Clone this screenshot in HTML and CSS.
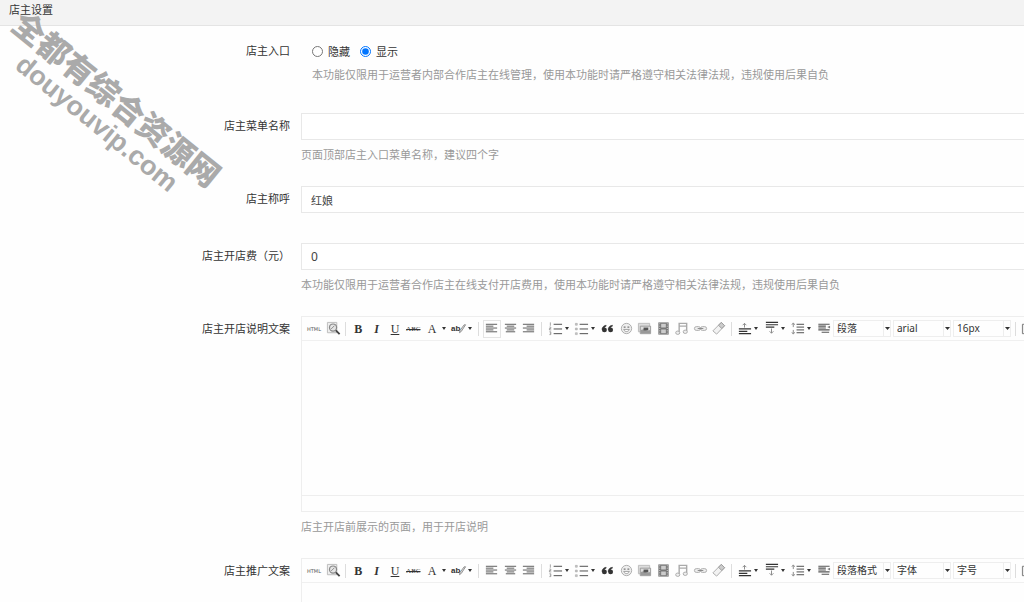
FILE: index.html
```html
<!DOCTYPE html>
<html lang="zh-CN">
<head>
<meta charset="utf-8">
<title>店主设置</title>
<link rel="stylesheet" href="styles.css">
</head>
<body>
<svg class="sprite" aria-hidden="true">
  <symbol id="i-preview" viewBox="0 0 16 16"><path d="M1.500 1.500h10v11h-10z" fill="#eee" stroke="#bbb"/><circle cx="7.500" cy="7" r="3.800" fill="#e4e4e4" stroke="#888" stroke-width="1.300"/><path d="M5.500 8.500l3.500-3.500" stroke="#888"/><path d="M10.500 10l4 4" stroke="#444" stroke-width="2"/></symbol>
  <symbol id="i-mark" viewBox="0 0 16 16"><path d="M14.500 4l-4.500 7-2 1.500.5-2.500 4.500-6z" fill="#ddd" stroke="#777" stroke-width=".8"/></symbol>
  <symbol id="i-left" viewBox="0 0 16 16"><path d="M2 3.500h12M2 5.500h8M2 7.500h12M2 9.500h8M2 11.500h12" stroke="#555"/></symbol>
  <symbol id="i-center" viewBox="0 0 16 16"><path d="M2 3.500h12M4 5.500h8M2 7.500h12M4 9.500h8M3 11.500h10" stroke="#555"/></symbol>
  <symbol id="i-right" viewBox="0 0 16 16"><path d="M2 3.500h12M6 5.500h8M2 7.500h12M6 9.500h8M2 11.500h12" stroke="#555"/></symbol>
  <symbol id="i-ol" viewBox="0 0 16 16"><path d="M6 3.500h9M6 8.500h9M6 13.500h9" stroke="#444"/><path d="M2.500 1.500v3.500M1.500 6.500h1.500v1.500h-1.500v1.500h2M1.500 11.500h1.500v3h-1.500M2 13h1" fill="none" stroke="#888" stroke-width=".8"/></symbol>
  <symbol id="i-ul" viewBox="0 0 16 16"><path d="M6 3.500h9M6 8.500h9M6 13.500h9" stroke="#444"/><path d="M1.500 2.500h2v2h-2zM1.500 7.500h2v2h-2zM1.500 12.500h2v2h-2z" fill="#ccc" stroke="#999" stroke-width=".5"/></symbol>
  <symbol id="i-quote" viewBox="0 0 16 16"><g fill="#333"><circle cx="4.700" cy="9.500" r="2.600"/><circle cx="11.300" cy="9.500" r="2.600"/><path d="M2.200 9.500C2 7 3.500 5 6.500 4.500v1C5 6 4.500 7 4.600 8zM8.800 9.500C8.600 7 10 5 13.200 4.500v1C11.500 6 11 7 11.200 8z" stroke="#333" stroke-width=".6"/></g></symbol>
  <symbol id="i-smile" viewBox="0 0 16 16"><circle cx="8" cy="8" r="5.500" fill="#eee" stroke="#aaa"/><path d="M5 6.500h2M9 6.500h2" stroke="#777" stroke-width="1.300"/><path d="M5 9c1 3 5 3 6 0z" fill="#fff" stroke="#888" stroke-width=".8"/></symbol>
  <symbol id="i-image" viewBox="0 0 16 16"><path d="M1.500 2.500h12v9h-12z" fill="#ddd" stroke="#bbb"/><path d="M3.500 5.500h11v8h-11z" fill="#ddd" stroke="#999"/><path d="M4 9.500l4-1 3 2 3-1v3.500H4z" fill="#999"/><path d="M7 7h5v3H7z" fill="#555"/></symbol>
  <symbol id="i-film" viewBox="0 0 16 16"><path d="M2.500 1.500h11v13h-11z" fill="#777"/><path d="M5.500 3h5v4h-5zM5.500 9h5v4h-5z" fill="#ccc"/><path d="M4 2.500v11M12 2.500v11" stroke="#ddd" stroke-dasharray="1 1.500"/></symbol>
  <symbol id="i-music" viewBox="0 0 16 16"><path d="M5.500 12V2.500h8V11M5.500 5.500h8" fill="none" stroke="#aaa" stroke-width="1.500"/><ellipse cx="4" cy="12.500" rx="2.200" ry="1.800" fill="#eee" stroke="#aaa"/><ellipse cx="12" cy="11.500" rx="2.200" ry="1.800" fill="#eee" stroke="#aaa"/></symbol>
  <symbol id="i-link" viewBox="0 0 16 16"><rect x="1.500" y="6" width="6.500" height="4" rx="2" fill="#eee" stroke="#aaa"/><rect x="8" y="6" width="6.500" height="4" rx="2" fill="#eee" stroke="#aaa"/><path d="M5 8h6" stroke="#888"/></symbol>
  <symbol id="i-erase" viewBox="0 0 16 16"><path d="M11 1.500l3.500 3.500-8.500 9-4-3.500z" fill="#f2f2f2" stroke="#aaa"/><path d="M11 1.500l3.500 3.500-3 3-3.500-3.500z" fill="#ccc" stroke="#999"/></symbol>
  <symbol id="i-top" viewBox="0 0 16 16"><path d="M2 8.500h13M2 11h9M2 13.500h13" stroke="#333" stroke-width="1.300"/><path d="M8 7V2.500M6 4.500l2-2 2 2" fill="none" stroke="#888"/></symbol>
  <symbol id="i-bottom" viewBox="0 0 16 16"><path d="M2 1.500h13M2 4h13M2 6.500h9" stroke="#333" stroke-width="1.300"/><path d="M8 8v5M6 11l2 2 2-2" fill="none" stroke="#888"/></symbol>
  <symbol id="i-height" viewBox="0 0 16 16"><path d="M7 3.500h8M7 6.500h8M7 9.500h8M7 12.500h8" stroke="#444"/><path d="M3.500 2.500v4M3.500 9.500v4M2 4l1.500-2L5 4M2 12l1.500 2L5 12" fill="none" stroke="#888"/></symbol>
  <symbol id="i-indent" viewBox="0 0 16 16"><path d="M2.500 3.500h12M2.500 5.500h8M2.500 7.500h8M2.500 9.500h12M6 12h8" stroke="#555" stroke-width="1.200"/><path d="M15 5l-3 1.500L15 8z" fill="#777"/></symbol>
  <symbol id="i-page" viewBox="0 0 16 16"><path d="M1.500 3.500h12v10h-12z" fill="#eee" stroke="#777"/></symbol>
</svg>

<header class="page-header"><h1>店主设置</h1></header>

<form class="settings">
  <fieldset class="row">
    <legend class="hidden">店主入口</legend>
    <span class="label">店主入口</span>
    <div class="field inset">
      <div class="choices">
        <label><input type="radio" name="entry">隐藏</label>
        <label><input type="radio" name="entry" checked>显示</label>
      </div>
      <p class="help">本功能仅限用于运营者内部合作店主在线管理，使用本功能时请严格遵守相关法律法规，违规使用后果自负</p>
    </div>
  </fieldset>

  <div class="row">
    <label class="label" for="menu">店主菜单名称</label>
    <div class="field">
      <input class="text" id="menu" type="text">
      <p class="help">页面顶部店主入口菜单名称，建议四个字</p>
    </div>
  </div>

  <div class="row plain">
    <label class="label" for="title">店主称呼</label>
    <div class="field"><input class="text" id="title" type="text" value="红娘"></div>
  </div>

  <div class="row">
    <label class="label" for="fee">店主开店费（元）</label>
    <div class="field">
      <input class="text number" id="fee" type="text" value="0">
      <p class="help">本功能仅限用于运营者合作店主在线支付开店费用，使用本功能时请严格遵守相关法律法规，违规使用后果自负</p>
    </div>
  </div>

  <div class="row">
    <label class="label" for="intro">店主开店说明文案</label>
    <div class="field">
      <div class="editor">
        <div class="toolbar" role="toolbar" aria-label="店主开店说明文案">
          <div class="group source">
            <button type="button" class="html">HTML</button>
            <button type="button" aria-label="预览"><svg><use href="#i-preview"/></svg></button>
          </div>
          <div class="group type">
            <button type="button" class="bold">B</button>
            <button type="button" class="italic">I</button>
            <button type="button" class="underline">U</button>
            <button type="button" class="strike">ABC</button>
            <button type="button" class="drop color">A</button>
            <button type="button" class="drop mark">ab<svg><use href="#i-mark"/></svg></button>
          </div>
          <div class="group align">
            <button type="button" class="active" aria-label="居左对齐"><svg><use href="#i-left"/></svg></button>
            <button type="button" aria-label="居中对齐"><svg><use href="#i-center"/></svg></button>
            <button type="button" aria-label="居右对齐"><svg><use href="#i-right"/></svg></button>
          </div>
          <div class="group insert">
            <button type="button" class="drop" aria-label="有序列表"><svg><use href="#i-ol"/></svg></button>
            <button type="button" class="drop" aria-label="无序列表"><svg><use href="#i-ul"/></svg></button>
            <button type="button" aria-label="引用"><svg><use href="#i-quote"/></svg></button>
            <button type="button" aria-label="表情"><svg><use href="#i-smile"/></svg></button>
            <button type="button" aria-label="图片"><svg><use href="#i-image"/></svg></button>
            <button type="button" aria-label="视频"><svg><use href="#i-film"/></svg></button>
            <button type="button" aria-label="音乐"><svg><use href="#i-music"/></svg></button>
            <button type="button" aria-label="超链接"><svg><use href="#i-link"/></svg></button>
            <button type="button" aria-label="清除格式"><svg><use href="#i-erase"/></svg></button>
          </div>
          <div class="group spacing">
            <button type="button" class="drop" aria-label="段前距"><svg><use href="#i-top"/></svg></button>
            <button type="button" class="drop" aria-label="段后距"><svg><use href="#i-bottom"/></svg></button>
            <button type="button" class="drop" aria-label="行间距"><svg><use href="#i-height"/></svg></button>
            <button type="button" aria-label="首行缩进"><svg><use href="#i-indent"/></svg></button>
          </div>
          <div class="group pickers">
            <select aria-label="段落格式"><option>段落</option></select>
            <select aria-label="字体"><option>arial</option></select>
            <select aria-label="字号"><option>16px</option></select>
          </div>
          <div class="group">
            <button type="button" aria-label="分页"><svg><use href="#i-page"/></svg></button>
          </div>
        </div>
        <textarea id="intro"></textarea>
        <div class="status"></div>
      </div>
      <p class="help">店主开店前展示的页面，用于开店说明</p>
    </div>
  </div>

  <div class="row">
    <label class="label" for="promo">店主推广文案</label>
    <div class="field">
      <div class="editor">
        <div class="toolbar" role="toolbar" aria-label="店主推广文案">
          <div class="group source">
            <button type="button" class="html">HTML</button>
            <button type="button" aria-label="预览"><svg><use href="#i-preview"/></svg></button>
          </div>
          <div class="group type">
            <button type="button" class="bold">B</button>
            <button type="button" class="italic">I</button>
            <button type="button" class="underline">U</button>
            <button type="button" class="strike">ABC</button>
            <button type="button" class="drop color">A</button>
            <button type="button" class="drop mark">ab<svg><use href="#i-mark"/></svg></button>
          </div>
          <div class="group align">
            <button type="button" aria-label="居左对齐"><svg><use href="#i-left"/></svg></button>
            <button type="button" aria-label="居中对齐"><svg><use href="#i-center"/></svg></button>
            <button type="button" aria-label="居右对齐"><svg><use href="#i-right"/></svg></button>
          </div>
          <div class="group insert">
            <button type="button" class="drop" aria-label="有序列表"><svg><use href="#i-ol"/></svg></button>
            <button type="button" class="drop" aria-label="无序列表"><svg><use href="#i-ul"/></svg></button>
            <button type="button" aria-label="引用"><svg><use href="#i-quote"/></svg></button>
            <button type="button" aria-label="表情"><svg><use href="#i-smile"/></svg></button>
            <button type="button" aria-label="图片"><svg><use href="#i-image"/></svg></button>
            <button type="button" aria-label="视频"><svg><use href="#i-film"/></svg></button>
            <button type="button" aria-label="音乐"><svg><use href="#i-music"/></svg></button>
            <button type="button" aria-label="超链接"><svg><use href="#i-link"/></svg></button>
            <button type="button" aria-label="清除格式"><svg><use href="#i-erase"/></svg></button>
          </div>
          <div class="group spacing">
            <button type="button" class="drop" aria-label="段前距"><svg><use href="#i-top"/></svg></button>
            <button type="button" class="drop" aria-label="段后距"><svg><use href="#i-bottom"/></svg></button>
            <button type="button" class="drop" aria-label="行间距"><svg><use href="#i-height"/></svg></button>
            <button type="button" aria-label="首行缩进"><svg><use href="#i-indent"/></svg></button>
          </div>
          <div class="group pickers">
            <select aria-label="段落格式"><option>段落格式</option></select>
            <select aria-label="字体"><option>字体</option></select>
            <select aria-label="字号"><option>字号</option></select>
          </div>
          <div class="group">
            <button type="button" aria-label="分页"><svg><use href="#i-page"/></svg></button>
          </div>
        </div>
        <textarea id="promo"></textarea>
        <div class="status"></div>
      </div>
    </div>
  </div>
</form>

<div class="watermark">
  <span>全都有综合资源网</span>
  <span class="domain">douyouvip.com</span>
</div>
</body>
</html>
```
FILE: styles.css
```css
* {
  box-sizing: border-box;
}

html {
  scrollbar-width: none;
}

body {
  position: relative;
  margin: 0;
  background: #fefefe;
  color: #333;
  font: 11px/20px "Noto Sans", "Noto Sans CJK SC", sans-serif;
  overflow-x: hidden;
}

.sprite {
  display: none;
}

.page-header {
  padding: 0 9px 5px;
  border-bottom: 1px solid #e4e4e4;
  background: #f3f3f3;
}

.page-header h1 {
  margin: 0;
  font-size: 11px;
  font-weight: 400;
}

.settings {
  display: flex;
  flex-direction: column;
  gap: 21px;
  padding-top: 12px;
}

.row {
  display: grid;
  grid-template-columns: 290px minmax(0, 1fr);
  column-gap: 11px;
  margin: 0;
  padding: 0;
  border: 0;
}

.row.plain {
  padding-bottom: 9px;
}

.hidden {
  position: absolute;
  width: 1px;
  height: 1px;
  padding: 0;
  overflow: hidden;
  clip-path: inset(50%);
}

.label {
  line-height: 26px;
  text-align: right;
}

.help {
  margin: 5px 0 0;
  color: #999;
}

.inset {
  padding: 0 0 7px 11px;
}

.inset .help {
  margin: 0;
}

.choices {
  display: flex;
  gap: 10px;
  line-height: 27px;
}

.choices label {
  display: flex;
  align-items: center;
  gap: 5px;
}

.choices input {
  width: 11px;
  height: 11px;
  margin: 0;
}

.text {
  display: block;
  width: 100%;
  height: 27px;
  padding: 0 9px;
  border: 1px solid #e8e8e8;
  border-right: 0;
  background: #fff;
  color: #444;
  font: inherit;
}

.number {
  font-size: 12px;
}

.editor {
  border: 1px solid #eee;
  border-right: 0;
}

.toolbar {
  display: flex;
  align-items: center;
  height: 24px;
  padding-left: 3px;
  border-bottom: 1px solid #f0f0f0;
  overflow: hidden;
}

.group {
  display: flex;
  flex: none;
  justify-content: space-between;
}

.group + .group:not(.pickers)::before {
  content: "";
  flex: none;
  align-self: center;
  width: 1px;
  height: 14px;
  margin: 0 3px;
  background: #ddd;
}

.group.source {
  width: 37px;
}

.group.type {
  width: 133px;
}

.group.align {
  width: 63px;
}

.group.insert {
  width: 190px;
}

.group.spacing {
  width: 104px;
}

.toolbar button {
  display: flex;
  flex: none;
  align-items: center;
  justify-content: center;
  width: 18px;
  height: 18px;
  padding: 0;
  border: 0;
  background: none;
  color: #333;
  font: 12px/18px "Liberation Serif", serif;
}

.toolbar button.active {
  border: 1px solid #e4e4e4;
}

.toolbar svg {
  flex: none;
  width: 15px;
  height: 15px;
}

.toolbar .drop {
  justify-content: space-between;
  width: 26px;
  padding: 0 3px 0 2px;
}

.drop::after {
  content: "";
  border: 2px solid transparent;
  border-top: 3px solid #333;
  border-bottom: 0;
}

.toolbar .html {
  color: #555;
  font: 5px/18px "DejaVu Sans", sans-serif;
}

.toolbar .bold {
  font-weight: 700;
}

.toolbar .italic {
  font-style: italic;
  font-weight: 700;
}

.toolbar .underline {
  text-decoration: underline;
}

.toolbar .strike {
  font-size: 7px;
  text-decoration: line-through;
}

.toolbar .color {
  padding-left: 5px;
}

.toolbar .mark {
  font: 700 8px/18px "Liberation Sans", sans-serif;
}

.mark svg {
  margin: 0 -1px 0 -10px;
}

.pickers {
  gap: 2px;
  padding: 0 1px;
}

.pickers select {
  width: 58px;
  height: 17px;
  padding: 0 8px 0 3px;
  border: 1px solid #eee;
  border-radius: 0;
  appearance: none;
  background:
    linear-gradient(#eee, #eee) right 6px top / 1px 100% no-repeat,
    url("data:image/svg+xml,%3Csvg xmlns='http://www.w3.org/2000/svg' width='5' height='3'%3E%3Cpath d='M0 0h5L2.500 3z' fill='%23333'/%3E%3C/svg%3E") right center no-repeat;
  color: #333;
  font: 10px/15px "Noto Sans", "Noto Sans CJK SC", sans-serif;
}

.editor textarea {
  display: block;
  width: 100%;
  height: 154px;
  padding: 8px;
  border: 0;
  background: transparent;
  font: inherit;
  resize: none;
}

.status {
  height: 16px;
  border-top: 1px solid #eee;
}

.watermark {
  position: absolute;
  top: 78px;
  left: -21px;
  display: flex;
  flex-direction: column;
  align-items: center;
  width: 256px;
  color: #aaa;
  font: 900 32px/33px "Noto Sans CJK SC", sans-serif;
  white-space: nowrap;
  transform: rotate(39deg);
  pointer-events: none;
}

.domain {
  font: 700 27px/33px "Liberation Sans", sans-serif;
}
```
